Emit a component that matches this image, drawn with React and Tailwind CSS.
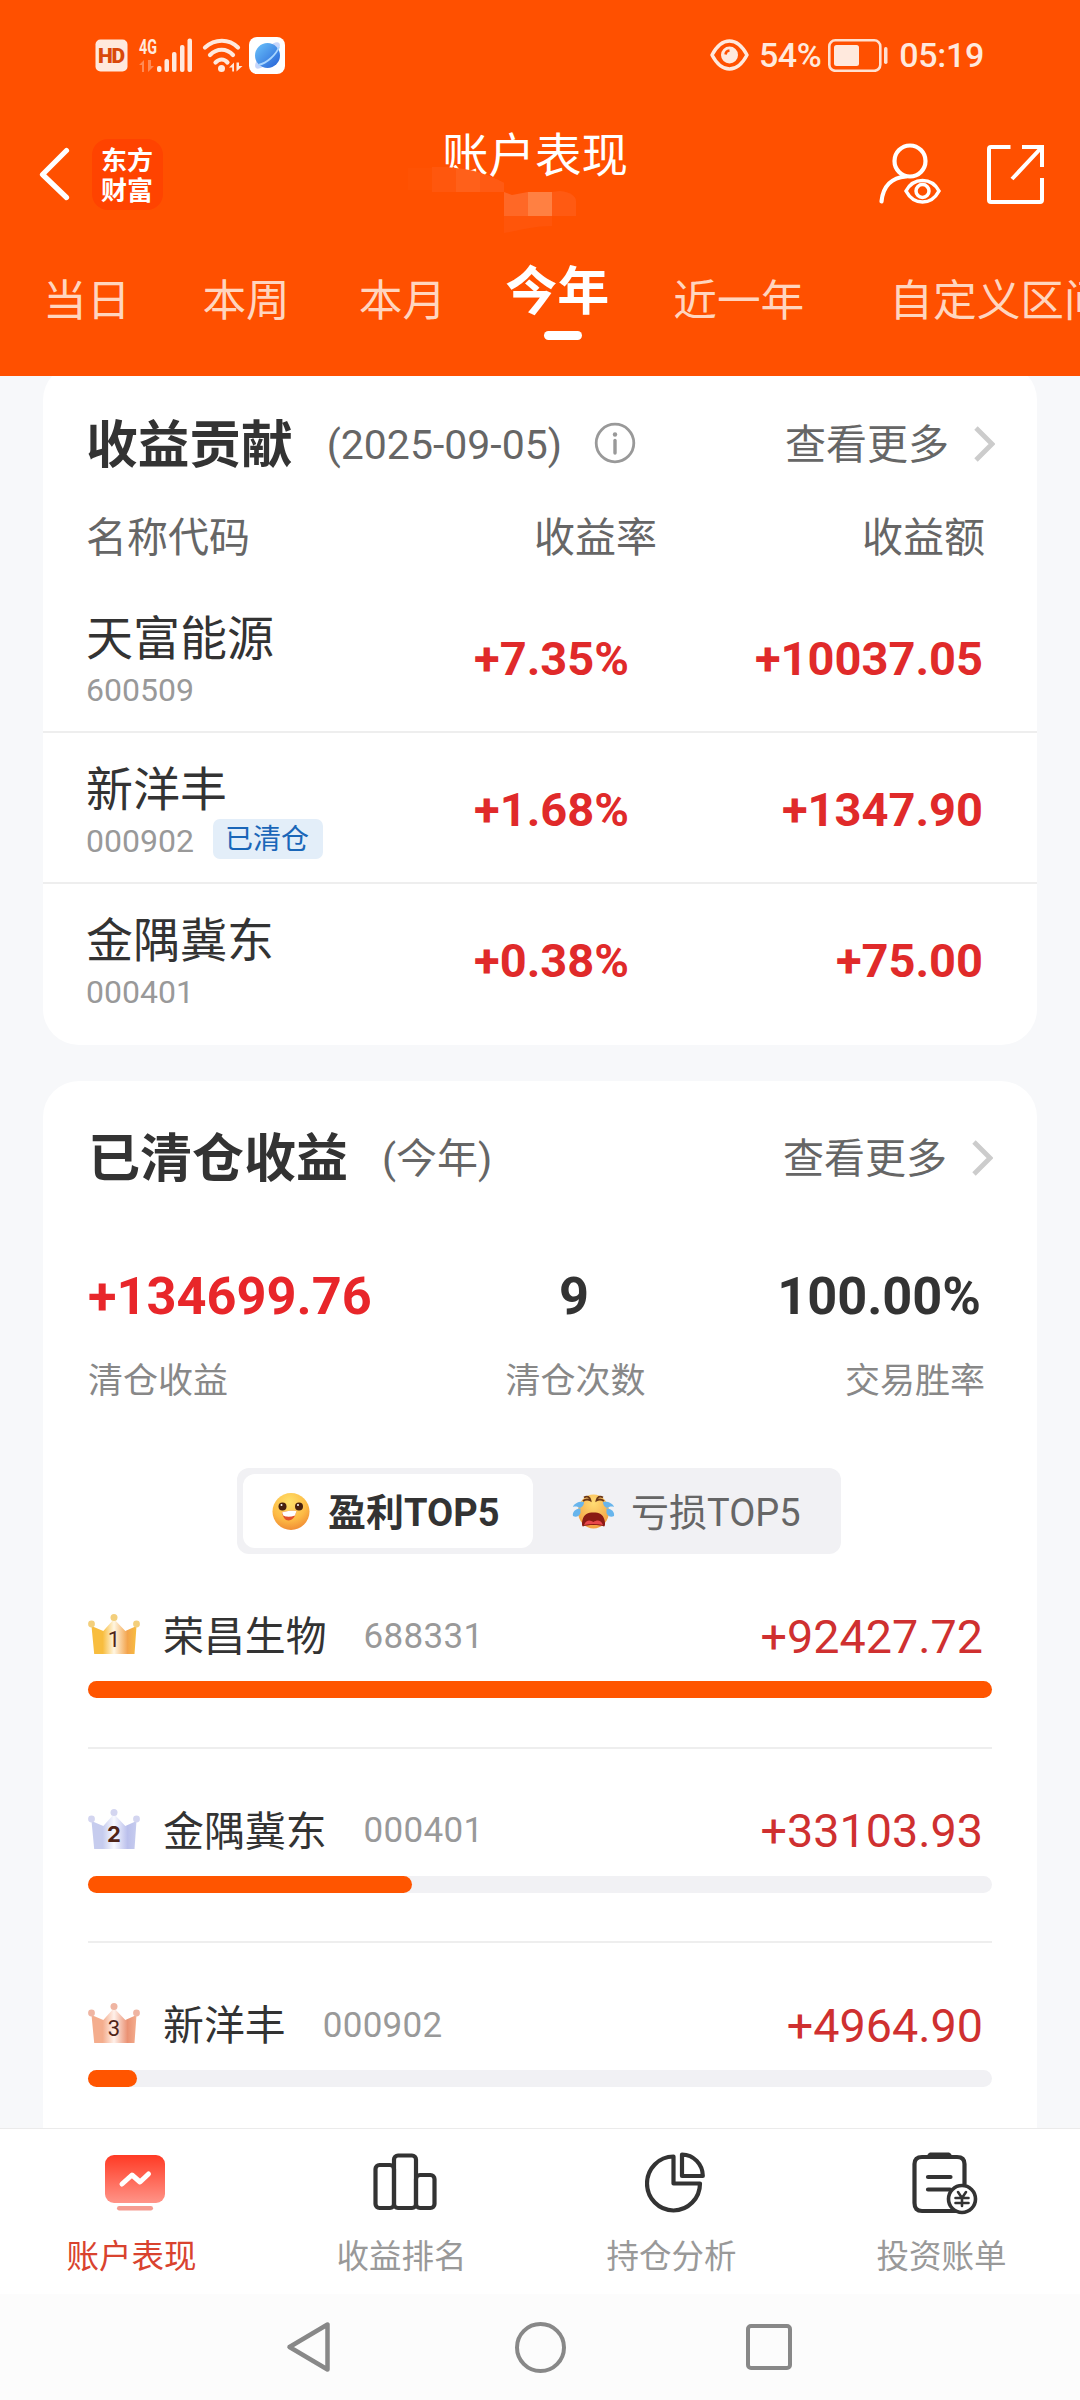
import React, { useState } from 'react';

const periods = [
  { key: 'day', label: '当日', className: 'ml-[43px]' },
  { key: 'week', label: '本周', className: 'ml-[72px]' },
  { key: 'month', label: '本月', className: 'ml-[69px]' },
  { key: 'year', label: '今年', className: 'ml-[59px]' },
  { key: 'last-year', label: '近一年', className: 'ml-[64px]' },
  { key: 'custom', label: '自定义区间', className: 'ml-[85px]' }
];

const contributions = [
  { name: '天富能源', code: '600509', rate: '+7.35%', amount: '+10037.05', cleared: false },
  { name: '新洋丰', code: '000902', rate: '+1.68%', amount: '+1347.90', cleared: true },
  { name: '金隅冀东', code: '000401', rate: '+0.38%', amount: '+75.00', cleared: false }
];

const topProfits = [
  { rank: 1, name: '荣昌生物', code: '688331', amount: 92427.72 },
  { rank: 2, name: '金隅冀东', code: '000401', amount: 33103.93 },
  { rank: 3, name: '新洋丰', code: '000902', amount: 4964.9 }
];

const crownColors = {
  1: { edge: '#f8bd3e', mid: '#fff6e2', end: '#f3a44c', ball: '#f3cf7c' },
  2: { edge: '#c6ccee', mid: '#f8f9ff', end: '#bbc0ec', ball: '#d3d5f0' },
  3: { edge: '#f4ad8d', mid: '#fff1ea', end: '#ea9274', ball: '#efb5a2' }
};

const StatusBar = () => (
  <div className="h-[110px] flex items-center justify-between pl-[95px] pr-[96px] text-[#ffe9dd]">
    <div className="flex items-center">
      <svg width="33" height="33" viewBox="0 0 33 33">
        <rect x="0.5" y="0.5" width="32" height="32" rx="5" fill="#ffe9dd" />
        <text x="16.5" y="24" textAnchor="middle" textLength="27" fontFamily="Roboto" fontWeight="900" fontSize="21" fill="#d9480a">HD</text>
      </svg>
      <svg className="ml-[11px] overflow-visible" width="54" height="35" viewBox="0 0 54 35">
        <text x="0" y="15.500" textLength="18" lengthAdjust="spacingAndGlyphs" fontFamily="Roboto" fontWeight="700" fontSize="21" fill="#ffe9dd">4G</text>
        <path d="M0 27l5-5v12H3v-7zM9 22v12l6-6h-3v-6z" fill="#ff8a55" />
        <g fill="#ffe9dd">
          <rect x="18" y="28" width="4.5" height="6" rx="2" />
          <rect x="25.500" y="21" width="4.5" height="13" rx="2" />
          <rect x="33" y="14" width="4.500" height="20" rx="2" />
          <rect x="41" y="7" width="4.500" height="27" rx="2" />
          <rect x="48.500" y="0.500" width="4.500" height="33.500" rx="2" />
        </g>
      </svg>
      <svg className="ml-[9px]" width="42" height="35" viewBox="0 0 42 35" fill="none" stroke="#ffe9dd" strokeWidth="4.200" strokeLinecap="round">
        <path d="M3 9.500C13 0.500 27 0.500 36 9.500" />
        <path d="M8 17C15 10 24.500 10 31 17" />
        <path d="M13.500 24.500C17.500 20.500 22 20.500 25.500 24.500" />
        <circle cx="19.500" cy="30.500" r="3.500" fill="#ffe9dd" stroke="none" />
        <path d="M27 29.500l5-5v9h-1.800v-4zM34.500 24.500v9l6-5.500h-3.500v-3.500z" fill="#ffe9dd" stroke="none" />
      </svg>
      <svg className="ml-[5px]" width="36" height="37" viewBox="0 0 36 37">
        <defs>
          <linearGradient id="planet" x1="0" y1="0" x2="1" y2="1">
            <stop offset="0" stopColor="#6cc4fb" />
            <stop offset="1" stopColor="#2460d6" />
          </linearGradient>
        </defs>
        <rect width="36" height="37" rx="8" fill="#fff" />
        <ellipse cx="18.500" cy="18.500" rx="17" ry="6" transform="rotate(-47 18.500 18.500)" fill="#c6d6fb" />
        <circle cx="18.500" cy="18.500" r="12.500" fill="url(#planet)" />
        <path d="M9.500 28C18 26 27 18 30 10" stroke="#a9d6ff" strokeWidth="1.800" fill="none" />
      </svg>
    </div>
    <div className="flex items-center text-[34px] font-medium leading-none">
      <svg width="39" height="32" viewBox="0 0 39 32" fill="none" stroke="#ffe9dd" strokeWidth="3.500">
        <path d="M2 16C7 6.500 13 2 19.500 2S32 6.500 37 16C32 25.500 26 30 19.500 30S7 25.500 2 16Z" strokeLinejoin="round" />
        <circle cx="19.500" cy="16" r="8.500" fill="#ffe9dd" stroke="none" />
        <path d="M15.500 15.500a4.500 4.500 0 0 1 4-4" stroke="#ff5000" strokeWidth="2.500" />
      </svg>
      <span className="ml-[10px] tracking-[-0.5px]">54%</span>
      <svg className="ml-[7px]" width="60" height="33" viewBox="0 0 60 33">
        <rect x="1.300" y="1.300" width="51" height="30.500" rx="6" fill="none" stroke="#ffe0d0" strokeWidth="2.600" />
        <rect x="6" y="6" width="25" height="21" rx="2.500" fill="#ffe9dd" />
        <rect x="56" y="8" width="3.500" height="17" rx="1.700" fill="#ffe0d0" />
      </svg>
      <span className="ml-[11px] tracking-[-0.300px]">05:19</span>
    </div>
  </div>
);

const TitleBar = () => (
  <div className="relative h-[128px] flex items-center justify-between pl-[39px] pr-[36px] text-white">
    <div className="flex items-center">
      <svg width="31" height="54" viewBox="0 0 31 54" fill="none" stroke="#fff" strokeWidth="5.200" strokeLinecap="round" strokeLinejoin="round">
        <path d="M27.500 3.500L3.500 27.500L27.500 50.500" />
      </svg>
      <div className="ml-[22px] w-[71px] h-[71px] rounded-[16px] bg-[#ff4300] flex items-center justify-center">
        <p className="w-[53px] break-all text-[26px] leading-[30px] font-bold font-['Noto_Sans_CJK_SC',sans-serif]">东方财富</p>
      </div>
    </div>
    <div className="absolute left-[442px] top-[16px]">
      <h1 className="text-[46.500px] leading-[60px] whitespace-nowrap">账户表现</h1>
      {/* Pixelated patch over the account name */}
      <svg className="absolute left-[-34px] top-[40px]" width="172" height="72" viewBox="0 0 172 72">
        <path d="M0 2h24v22H0z" fill="#ff5203" />
        <path d="M24 1h14l10 1v24H24z" fill="#ff570d" />
        <path d="M48 2C70 4 82 10 96 17v9H48z" fill="#ff601a" />
        <path d="M72 8C82 10 90 14 96 17v9H72z" fill="#ff5a13" />
        <path d="M96 26l8 3 16-3v24H96z" fill="#ff6826" />
        <path d="M120 26h24v24h-24z" fill="#ff8042" />
        <path d="M144 26l8-1c10 1 16 5 16 10v15h-24z" fill="#ff5a12" />
        <path d="M96 50h48v10c-18 0-30 4-48 7z" fill="#ff550a" />
      </svg>
    </div>
    <div className="flex items-center">
      <svg width="62" height="62" viewBox="0 0 62 62" fill="none" stroke="#fff" strokeWidth="4.200" strokeLinecap="round">
        <circle cx="31" cy="18" r="15.500" />
        <path d="M2.500 58.500C4 43 13 34.500 27 33.500" />
        <path d="M27 48C31 40.500 36.500 37.500 43.500 37.500S56 40.500 60 48C56 55.500 50.500 59 43.500 59S31 55.500 27 48Z" strokeWidth="3.500" />
        <circle cx="43.500" cy="48" r="6.500" strokeWidth="3.500" />
      </svg>
      <svg className="ml-[46px]" width="57" height="59" viewBox="0 0 57 59" fill="none" stroke="#fff" strokeWidth="4">
        <path d="M23.500 2H4Q2 2 2 4V55Q2 57 4 57H53Q55 57 55 55V33" />
        <path d="M35 2H55V22M55 2L25 34" />
      </svg>
    </div>
  </div>
);

const InfoIcon = () => (
  <svg width="42" height="42" viewBox="0 0 42 42" fill="none" stroke="#999" strokeWidth="2.800">
    <circle cx="21" cy="21" r="18.800" />
    <path d="M21 18.500V31" strokeWidth="3.400" strokeLinecap="round" />
    <circle cx="21" cy="12.500" r="2.200" fill="#999" stroke="none" />
  </svg>
);

const MoreLink = () => (
  <button className="flex items-center text-[41px] leading-[60px] text-[#666]">
    <span className="pt-[2px]">查看更多</span>
    <svg className="ml-[25px]" width="21" height="36" viewBox="0 0 21 36" fill="none" stroke="#ccc" strokeWidth="4.800">
      <path d="M2 2L18 18L2 34" />
    </svg>
  </button>
);

const Crown = ({ rank }) => {
  const c = crownColors[rank];
  return (
    <svg className="mb-[4px]" width="52" height="40" viewBox="0 0 52 40">
      <defs>
        <linearGradient id={`crown-${rank}`}>
          <stop offset="0" stopColor={c.edge} />
          <stop offset="0.25" stopColor={c.edge} />
          <stop offset="0.5" stopColor={c.mid} />
          <stop offset="0.8" stopColor={c.end} />
          <stop offset="1" stopColor={c.edge} />
        </linearGradient>
      </defs>
      <path d="M3.500 12L15.300 17L26 5L37.300 17L48.500 12L46.500 40H6.200Z" fill={`url(#crown-${rank})`} />
      <circle cx="3.500" cy="10" r="3.400" fill={c.ball} />
      <circle cx="26" cy="3.600" r="3.500" fill={c.ball} />
      <circle cx="48.500" cy="10" r="3.400" fill={c.ball} />
      <text x="26" y="33" textAnchor="middle" fontFamily={rank === 2 ? 'Inter' : 'Roboto'} fontWeight={rank === 2 ? 700 : 400} fontSize="22" fill="#4f2418">{rank}</text>
    </svg>
  );
};

const SmileIcon = () => (
  <svg width="38" height="39" viewBox="0 0 38 39">
    <defs>
      <radialGradient id="smile" cx="0.45" cy="0.25" r="0.8">
        <stop offset="0" stopColor="#ffe16a" />
        <stop offset="0.6" stopColor="#fdbb45" />
        <stop offset="1" stopColor="#ef8632" />
      </radialGradient>
    </defs>
    <circle cx="19" cy="19.500" r="18.500" fill="url(#smile)" />
    <circle cx="10.500" cy="14.500" r="4" fill="#47210f" />
    <circle cx="27" cy="14.500" r="4" fill="#47210f" />
    <circle cx="9.500" cy="13" r="1" fill="#fff" />
    <circle cx="26" cy="13" r="1" fill="#fff" />
    <path d="M10 20.500C15 18.500 20 18.500 24.500 19C23 25 20.500 28.500 16.500 28.500C13 28.500 11 25 10 20.500Z" fill="#e2502c" />
    <path d="M10 20.500C15 18.500 20 18.500 24.500 19L23 23.500C19 25 14 25 11.500 23.800Z" fill="#fff" />
  </svg>
);

const CryIcon = () => (
  <svg width="43" height="35" viewBox="0 0 43 35">
    <defs>
      <radialGradient id="cry" cx="0.5" cy="0.25" r="0.8">
        <stop offset="0" stopColor="#ffdc74" />
        <stop offset="1" stopColor="#f39a3c" />
      </radialGradient>
    </defs>
    <ellipse cx="21.500" cy="17.500" rx="15.500" ry="17" fill="url(#cry)" />
    <path d="M10.500 26C12 20 16 18.500 21.500 18.500S31 20 32.500 26C33.500 30 33 32 32 32.500C28 30.500 15 30.500 11 32.500C10 32 9.500 30 10.500 26Z" fill="#8a1a14" />
    <path d="M12 31C14.500 25.500 18 26 21.500 28C25 26 28.500 25.500 31 31C25 29.500 18 29.500 12 31Z" fill="#e8474b" />
    <path d="M12 3.500C15 1.500 18 3 18.500 6.500C16 5 13 5.500 11 7M31 3.500C28 1.500 25 3 24.500 6.500C27 5 30 5.500 32 7" fill="none" stroke="#6d3717" strokeWidth="1.800" />
    <path d="M12 8C8 7 2 9 1 13C4 12 6 13 8 14C10.500 13 12 11 12 8ZM8.500 14.500C4 14 0 18 1 22C4 24 7.500 22 8.500 19Z" fill="#68b5ec" />
    <path d="M31 8C35 7 41 9 42 13C39 12 37 13 35 14C32.500 13 31 11 31 8ZM34.500 14.500C39 14 43 18 42 22C39 24 35.500 22 34.500 19Z" fill="#68b5ec" />
  </svg>
);

const PerformanceIcon = () => (
  <svg width="60" height="64" viewBox="0 0 60 64">
    <defs>
      <linearGradient id="perf" x1="0" y1="0" x2="0" y2="1">
        <stop offset="0" stopColor="#ff3a24" />
        <stop offset="1" stopColor="#ff9488" />
      </linearGradient>
    </defs>
    <rect x="0" y="4" width="60" height="48" rx="9" fill="url(#perf)" />
    <path d="M17 33L27 24L35 31L43.500 23" fill="none" stroke="#fff" strokeWidth="5" strokeLinecap="round" strokeLinejoin="round" />
    <rect x="12" y="55" width="36" height="4.500" rx="2.200" fill="#f59c91" />
  </svg>
);

const RankingIcon = () => (
  <svg width="64" height="64" viewBox="0 0 64 64" fill="none" stroke="#333" strokeWidth="4.200">
    <rect x="2.500" y="14" width="18.500" height="43" rx="4" />
    <rect x="21" y="4.500" width="22" height="52.500" rx="4" />
    <rect x="43" y="24" width="18.500" height="33" rx="4" />
  </svg>
);

const AnalysisIcon = () => (
  <svg width="60" height="64" viewBox="0 0 60 64" fill="none" stroke="#333" strokeWidth="4.200" strokeLinejoin="round">
    <path d="M28.500 5.500A26.500 27 0 1 0 55 32.500H28.500Z" />
    <path d="M37 3.500V25H57.800A21 21.500 0 0 0 37 3.500Z" />
  </svg>
);

const BillIcon = () => (
  <svg width="66" height="64" viewBox="0 0 66 64" fill="none" stroke="#333" strokeWidth="4.200" strokeLinecap="round">
    <path d="M45 60H10Q2.500 60 2.500 52V13Q2.500 6 10 6H45Q52.500 6 52.500 13V33" />
    <path d="M18 1.500h19q3 1 3 5H15q0-4 3-5z" fill="#333" stroke="none" />
    <path d="M16 26H38.500M16 38.500H38" />
    <circle cx="50" cy="48" r="13.500" fill="#fff" strokeWidth="3.600" />
    <path d="M46 41L50 47L54 41M50 47V55M43.500 47H56.500M43.500 52H56.500" strokeWidth="2.600" />
  </svg>
);

const navItems = [
  { label: '账户表现', icon: PerformanceIcon },
  { label: '收益排名', icon: RankingIcon },
  { label: '持仓分析', icon: AnalysisIcon },
  { label: '投资账单', icon: BillIcon }
];

const ContributionCard = () => (
  <section className="mt-[-12px] h-[681px] rounded-[36px] bg-white pt-[50px]">
    <div className="h-[60px] flex items-center pl-[43px] pr-[42px]">
      <h2 className="pt-[4px] text-[51.700px] leading-[60px] font-bold text-[#333]">收益贡献</h2>
      <span className="ml-[34px] pt-[2px] text-[41px] leading-[60px] text-[#666]">(2025-09-05)</span>
      <span className="ml-[32px] mb-[2px] flex"><InfoIcon /></span>
      <div className="ml-auto"><MoreLink /></div>
    </div>
    <div className="mt-[34px] h-[60px] flex items-center px-[43px] text-[41px] leading-[60px] text-[#666]">
      <span className="w-[300px]">名称代码</span>
      <span className="w-[271px] text-right">收益率</span>
      <span className="ml-auto pr-[9px]">收益额</span>
    </div>
    <div className="mt-[14px]">
      {contributions.map((item, i) => (
        <div
          key={item.code}
          className={`h-[151px] flex px-[43px] ${i < contributions.length - 1 ? 'border-b-2 border-[#eee]' : ''}`}
        >
          <div className="w-[300px] pt-[32px]">
            <p className="text-[47px] leading-[50px] text-[#333]">{item.name}</p>
            <div className="mt-[4px] h-[40px] flex items-center">
              <span className="pt-[3px] text-[32px] leading-[40px] text-[#999]">{item.code}</span>
              {item.cleared && (
                <span className="ml-[19px] w-[110px] h-[40px] rounded-[7px] bg-[#e3eef9] pr-[2px] text-center text-[28px] leading-[41px] text-[#1a66b8]">已清仓</span>
              )}
            </div>
          </div>
          <div className="w-[243px] pt-[47px] text-right text-[47px] leading-[60px] font-bold text-[#e02a2a]">{item.rate}</div>
          <div className="ml-auto pr-[11px] pt-[47px] text-right text-[47px] leading-[60px] font-bold text-[#e02a2a]">{item.amount}</div>
        </div>
      ))}
    </div>
  </section>
);

const ClearedCard = () => {
  const [tab, setTab] = useState('profit');
  const max = topProfits[0].amount;

  return (
    <section className="mt-[36px] h-[1100px] rounded-[36px] bg-white px-[45px] pt-[47px]">
      <div className="h-[60px] flex items-center">
        <h2 className="pt-[4px] text-[52px] leading-[60px] font-bold text-[#333]">已清仓收益</h2>
        <span className="ml-[34px] pt-[2px] text-[41px] leading-[60px] text-[#666]">(今年)</span>
        <div className="ml-auto mr-[-1px]"><MoreLink /></div>
      </div>

      <div className="mt-[78px] grid grid-cols-[390px_192px_1fr] pr-[8px]">
        <div>
          <p className="text-[52.300px] leading-[60px] font-bold text-[#e8262a]">+134699.76</p>
          <p className="mt-[26px] text-[35px] leading-[60px] text-[#888]">清仓收益</p>
        </div>
        <div className="text-center">
          <p className="text-[52.300px] leading-[60px] font-bold text-[#333]">9</p>
          <p className="mt-[26px] pl-[3px] text-[35px] leading-[60px] text-[#888] whitespace-nowrap">清仓次数</p>
        </div>
        <div className="text-right">
          <p className="pr-[3px] text-[52.300px] leading-[60px] font-bold text-[#333]">100.00%</p>
          <p className="mt-[26px] mr-[-1px] text-[35px] leading-[60px] text-[#888]">交易胜率</p>
        </div>
      </div>

      <div className="mt-[56px] ml-[149px] w-[604px] h-[86px] rounded-[12px] bg-[#f1f1f4] p-[6px] flex">
        <button
          onClick={() => setTab('profit')}
          className={`w-[290px] h-[74px] rounded-[12px] flex items-center pl-[29px] text-[38px] leading-none ${tab === 'profit' ? 'bg-white font-bold text-[#333]' : 'text-[#666]'}`}
        >
          <SmileIcon />
          <span className="ml-[18px] pt-[3px]">盈利TOP5</span>
        </button>
        <button
          onClick={() => setTab('loss')}
          className={`w-[302px] h-[74px] rounded-[12px] flex items-center pl-[39px] text-[38px] leading-none ${tab === 'loss' ? 'bg-white font-bold text-[#333]' : 'text-[#666]'}`}
        >
          <CryIcon />
          <span className="ml-[16px] pt-[3px]">亏损TOP5</span>
        </button>
      </div>

      <div className="w-[904px]">
        {topProfits.map((item) => (
          <div key={item.rank} className="h-[194.500px] border-b-2 border-[#eee] pt-[55px]">
            <div className="h-[54px] flex items-center pr-[9px]">
              <Crown rank={item.rank} />
              <span className="ml-[23px] pt-[2px] text-[40.900px] leading-[54px] text-[#333]">{item.name}</span>
              <span className="ml-[37px] pt-[1px] text-[35px] leading-[54px] tracking-[0.300px] text-[#999]">{item.code}</span>
              <span className="ml-auto pt-[1px] text-[46.700px] leading-[54px] text-[#cf3030]">+{item.amount.toFixed(2)}</span>
            </div>
            <div className="mt-[18px] h-[17px] rounded-full bg-[#f1f1f4]">
              <div className="h-full rounded-full bg-[#ff5500]" style={{ width: `${(item.amount / max) * 100}%` }} />
            </div>
          </div>
        ))}
      </div>
    </section>
  );
};

const App = () => {
  const [period, setPeriod] = useState('year');

  return (
    <div className="w-[1080px] h-[2400px] flex flex-col overflow-hidden bg-[#f7f8fa] font-['Roboto','Noto_Sans_CJK_SC',sans-serif]">
      <header className="h-[376px] shrink-0 bg-[#ff5000] overflow-hidden">
        <StatusBar />
        <TitleBar />
        <nav className="h-[138px] flex items-start whitespace-nowrap">
          {periods.map((p) => (
            <button key={p.key} onClick={() => setPeriod(p.key)} className={`shrink-0 flex flex-col items-center ${p.className}`}>
              {p.key === period ? (
                <>
                  <span className="mt-[25px] text-[52px] leading-[60px] font-bold text-white">{p.label}</span>
                  <span className="mt-[8px] ml-[12px] w-[38px] h-[9px] rounded-full bg-white" />
                </>
              ) : (
                <span className="mt-[33px] text-[43.700px] leading-[60px] text-[#ffd5bf]">{p.label}</span>
              )}
            </button>
          ))}
        </nav>
      </header>

      <main className="h-[1752px] shrink-0 overflow-hidden px-[43px]">
        <ContributionCard />
        <ClearedCard />
      </main>

      <nav className="h-[166px] shrink-0 border-t border-[#ebebeb] bg-white grid grid-cols-4">
        {navItems.map(({ label, icon: Icon }, i) => (
          <div key={label} className="flex flex-col items-center pt-[22px]">
            <Icon />
            <span className={`mt-[22px] mr-[7px] text-[32.500px] leading-[40px] ${i === 0 ? 'text-[#d9432f]' : 'text-[#999]'}`}>{label}</span>
          </div>
        ))}
      </nav>

      <div className="h-[106px] shrink-0 bg-[#fcfcfc] flex items-center pl-[286px]">
        <svg width="45" height="52" viewBox="0 0 45 52" fill="none" stroke="#888" strokeWidth="4.500" strokeLinejoin="round">
          <path d="M41.500 3.500V48.500L3.500 26Z" />
        </svg>
        <div className="ml-[184px] w-[51px] h-[51px] rounded-full border-[4.500px] border-[#888]" />
        <div className="ml-[180px] w-[46px] h-[46px] rounded-[5px] border-[4.500px] border-[#888]" />
      </div>
    </div>
  );
};

export default App;
